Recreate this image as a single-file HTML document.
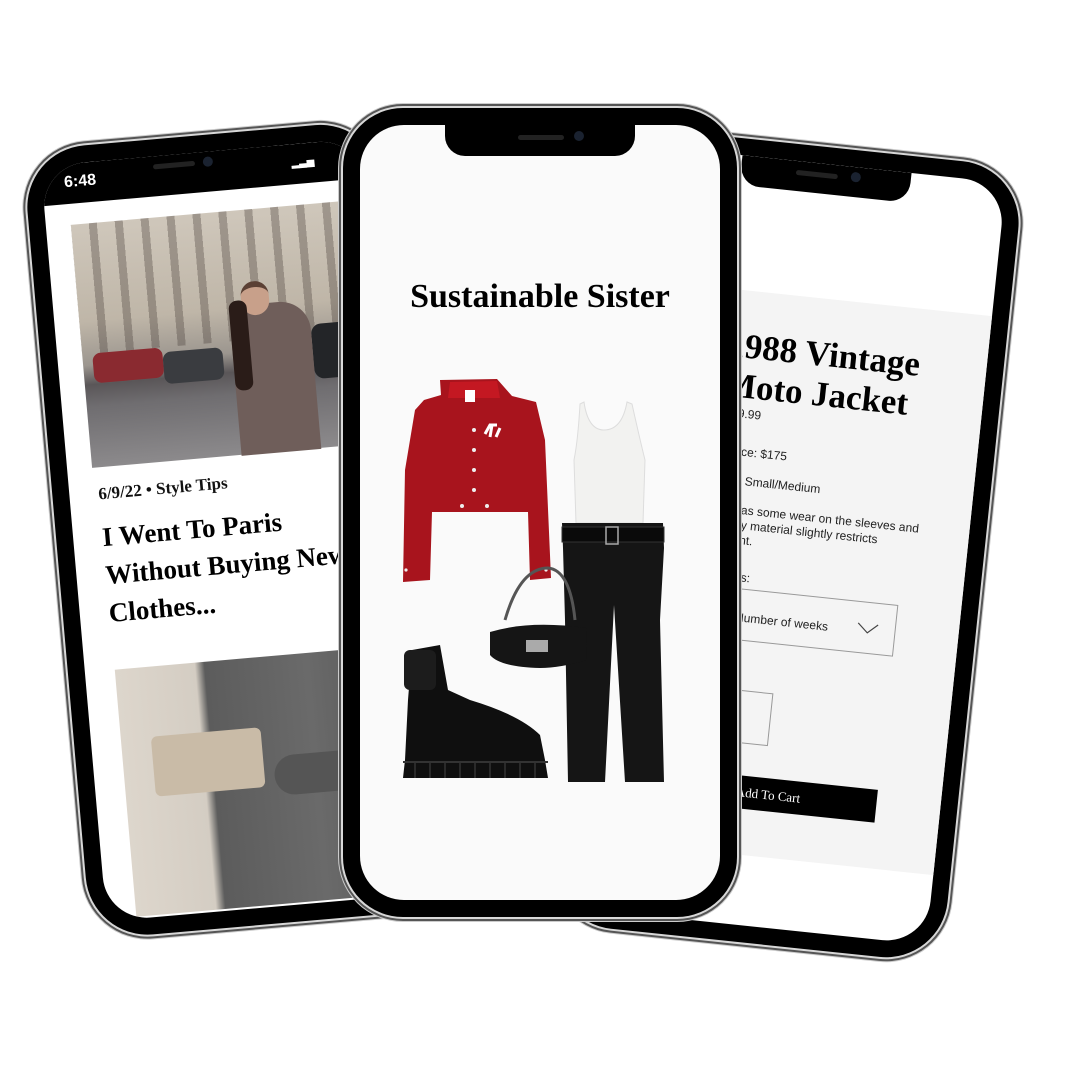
<!DOCTYPE html>
<html><head><meta charset="utf-8"><style>
*{margin:0;padding:0;box-sizing:border-box}
body{width:1080px;height:1080px;background:#fff;position:relative;overflow:hidden;font-family:"Liberation Sans",sans-serif}
.phone{position:absolute;background:#000;border-radius:62px;box-shadow:0 0 0 2px #d8d8d8,0 0 0 4px #555,0 0 0 5px #ccc}
.scr{position:absolute;left:17px;top:17px;right:17px;bottom:17px;border-radius:44px;overflow:hidden}
.notch{position:absolute;top:0;height:30px;background:#000;border-radius:0 0 20px 20px}
.abs{position:absolute;white-space:nowrap}
.serif{font-family:"Liberation Serif",serif}
</style></head><body>

<!-- LEFT PHONE -->
<div class="phone" style="left:56px;top:135px;width:356px;height:792px;transform:rotate(-5deg);transform-origin:164px 395px">
  <div class="scr" style="background:#fff">
    <div class="abs" style="left:0;top:0;width:100%;height:40px;background:#000"></div>
    <div class="abs" style="left:22px;top:10px;color:#fff;font-size:16px;font-weight:bold">6:48</div>
    <div class="abs" style="left:250px;top:14px;width:30px;height:10px;color:#fff;font-size:10px">▂▃▅</div>
    <div class="notch" style="left:55px;width:180px"></div>
    <div class="abs" style="left:112px;top:8px;width:42px;height:5px;border-radius:3px;background:#222"></div>
    <div class="abs" style="left:162px;top:5px;width:10px;height:10px;border-radius:5px;background:#1a2230"></div>
    <div class="abs" style="left:25px;top:61px;width:320px;height:244px;background:linear-gradient(180deg,#cfc7bb 0%,#bfb6a8 40%,#9c968f 58%,#5a5658 66%,#6f6d70 75%,#8c8a8c 100%)">
      <div class="abs" style="left:0;top:0;width:100%;height:130px;background:repeating-linear-gradient(90deg,transparent 0 18px,rgba(70,60,55,.35) 18px 26px)"></div>
      <div class="abs" style="left:10px;top:130px;width:70px;height:30px;background:#8a2a30;border-radius:8px"></div>
      <div class="abs" style="left:80px;top:135px;width:60px;height:32px;background:#3a3c40;border-radius:8px"></div>
      <div class="abs" style="left:230px;top:120px;width:90px;height:55px;background:#232528;border-radius:10px"></div>
      <div class="abs" style="left:150px;top:95px;width:80px;height:150px;background:#6f5e5a;border-radius:30px 30px 0 0"></div>
      <div class="abs" style="left:163px;top:72px;width:28px;height:34px;background:#c8a08a;border-radius:14px;border-top:6px solid #5b4034"></div>
      <div class="abs" style="left:150px;top:90px;width:18px;height:90px;background:#2a1c18;border-radius:8px"></div>
    </div>
    <div class="abs serif" style="left:29px;top:322px;font-size:17px;font-weight:bold;color:#111">6/9/22 • Style Tips</div>
    <div class="abs serif" style="left:29px;top:356px;font-size:27px;font-weight:bold;line-height:38px;color:#000">I Went To Paris<br>Without Buying New<br>Clothes...</div>
    <div class="abs" style="left:30px;top:508px;width:320px;height:248px;background:linear-gradient(90deg,#ddd6cc 0%,#d4cdc3 25%,#5c5c5c 28%,#6a6a6a 60%,#4d4d4d 100%)">
      <div class="abs" style="left:30px;top:70px;width:110px;height:60px;background:#c9bba7;border-radius:6px"></div>
      <div class="abs" style="left:150px;top:100px;width:130px;height:40px;background:#555;border-radius:20px"></div>
    </div>
    <div class="abs" style="left:92px;top:760px;font-size:10px;color:#777">⊕ yoursustainablesister.com</div>
  </div>
</div>

<!-- RIGHT PHONE -->
<div class="phone" style="left:590px;top:145px;width:394px;height:800px;transform:rotate(6deg)">
  <div class="scr" style="background:#fff">
    <div class="notch" style="left:95px;width:170px"></div>
    <div class="abs" style="left:150px;top:9px;width:42px;height:5px;border-radius:3px;background:#222"></div>
    <div class="abs" style="left:205px;top:5px;width:10px;height:10px;border-radius:5px;background:#1a2230"></div>
    <div class="abs" style="left:-17px;top:134px;width:400px;height:562px;background:#f4f4f4"></div>
    <div class="abs serif" style="left:100px;top:170px;font-size:35px;line-height:40px;font-weight:bold;color:#000">1988 Vintage<br>Moto Jacket</div>
    <div class="abs" style="left:104px;top:250px;font-size:12px;color:#222">$59.99</div>
    <div class="abs" style="left:76px;top:288px;font-size:12px;color:#222">Retail Price: $175</div>
    <div class="abs" style="left:76px;top:317px;font-size:12px;color:#222">Fits Sizes Small/Medium</div>
    <div class="abs" style="left:86px;top:346px;font-size:12px;line-height:15px;color:#222">Jacket has some wear on the sleeves and<br>the heavy material slightly restricts<br>movement.</div>
    <div class="abs" style="left:50px;top:413px;font-size:12px;color:#222">Number of weeks:</div>
    <div class="abs" style="left:60px;top:431px;width:237px;height:52px;border:1px solid #999"></div>
    <div class="abs" style="left:136px;top:453px;font-size:12px;color:#222">Number of weeks</div>
    <svg class="abs" style="left:258px;top:452px" width="22" height="12"><path d="M1 1 L11 10 L21 1" stroke="#444" fill="none" stroke-width="1.2"/></svg>
    <div class="abs" style="left:60px;top:532px;width:122px;height:53px;border:1px solid #999"></div>
    <div class="abs" style="left:55px;top:617px;width:241px;height:33px;background:#000"></div>
    <div class="abs serif" style="left:155px;top:626px;font-size:13px;color:#fff">Add To Cart</div>
  </div>
</div>

<!-- CENTER PHONE -->
<div class="phone" style="left:343px;top:108px;width:394px;height:809px;border-radius:60px">
  <div class="scr" style="background:#fafafa">
    <div class="notch" style="left:85px;width:190px;height:31px"></div>
    <div class="abs" style="left:158px;top:10px;width:46px;height:5px;border-radius:3px;background:#222"></div>
    <div class="abs" style="left:214px;top:6px;width:10px;height:10px;border-radius:5px;background:#1a2230"></div>
  </div>
</div>
<div class="abs serif" style="left:360px;width:360px;top:278px;text-align:center;font-size:34px;font-weight:bold;color:#000">Sustainable Sister</div>

<svg class="abs" style="left:0;top:0" width="1080" height="1080" viewBox="0 0 1080 1080">
  <path d="M440 380 L497 379 L512 396 L536 402 L545 440 L551 578 L530 580 L528 512 L432 512 L430 580 L403 582 L405 470 L415 410 L424 400 L441 395 Z" fill="#a8141d"/>
  <path d="M450 382 L497 381 L500 398 L448 398 Z" fill="#c41822"/>
  <rect x="465" y="390" width="10" height="12" fill="#fff"/>
  <path d="M485 434 L490 425 L497 425 M492 425 L490 437 M496 437 L500 428" stroke="#fff" stroke-width="3" fill="none"/>
  <g fill="#eee"><circle cx="474" cy="430" r="2"/><circle cx="474" cy="450" r="2"/><circle cx="474" cy="470" r="2"/><circle cx="474" cy="490" r="2"/><circle cx="462" cy="506" r="2"/><circle cx="487" cy="506" r="2"/><circle cx="406" cy="570" r="1.6"/><circle cx="546" cy="570" r="1.6"/></g>
  <path d="M584 402 Q588 430 604 430 Q622 430 627 402 L632 404 Q640 440 645 460 L643 523 L576 523 L574 460 Q578 440 580 404 Z" fill="#f2f2f0" stroke="#ddd" stroke-width="1"/>
  <path d="M562 523 L663 523 L664 548 L660 620 L664 782 L625 782 L614 605 L605 782 L568 782 L565 620 L563 548 Z" fill="#151515"/>
  <rect x="562" y="527" width="102" height="15" fill="#0a0a0a" stroke="#333" stroke-width="1"/>
  <rect x="606" y="527" width="12" height="17" fill="none" stroke="#aaa" stroke-width="1.5"/>
  <path d="M505 620 Q520 568 548 568 Q570 570 575 620" stroke="#555" stroke-width="3" fill="none"/>
  <path d="M490 632 Q530 620 586 628 L587 660 Q560 668 540 668 Q500 667 490 655 Z" fill="#151515"/>
  <rect x="526" y="640" width="22" height="12" fill="#aaa"/>
  <path d="M412 650 L440 645 L448 690 L470 700 Q520 715 540 735 L545 760 L548 778 L403 778 L405 760 L408 700 Z" fill="#0f0f0f"/>
  <rect x="404" y="650" width="32" height="40" rx="6" fill="#1c1c1c"/>
  <path d="M403 762 L548 762" stroke="#333" stroke-width="2"/>
  <path d="M415 762 L415 778 M430 762 L430 778 M445 762 L445 778 M460 762 L460 778 M475 762 L475 778 M490 762 L490 778 M505 762 L505 778 M520 762 L520 778 M535 762 L535 778" stroke="#333" stroke-width="1.5"/>
</svg>
</body></html>
